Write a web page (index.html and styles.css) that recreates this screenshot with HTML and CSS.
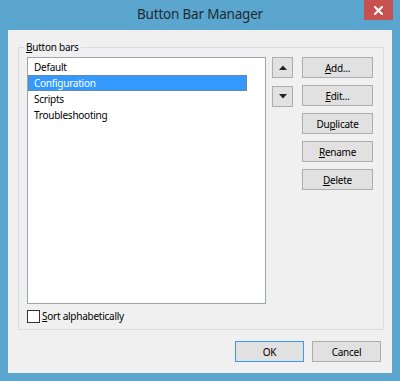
FILE: index.html
```html
<!DOCTYPE html>
<html>
<head>
<meta charset="utf-8">
<link rel="stylesheet" href="styles.css">
</head>
<body>
<div class="window">
  <div class="titlebar">
    <span class="title">Button Bar Manager</span>
    <div class="close">
      <svg width="9" height="9" viewBox="0 0 9 9"><path d="M1 1L8 8M8 1L1 8" stroke="#fff" stroke-width="2" stroke-linecap="square"/></svg>
    </div>
  </div>
  <div class="client">
    <fieldset class="group">
      <legend class="legend"><u>B</u>utton bars</legend>
      <div class="group-row">
        <div class="list">
          <div class="item">Default</div>
          <div class="item selected">Configuration</div>
          <div class="item">Scripts</div>
          <div class="item">Troubleshooting</div>
        </div>
        <div class="arrows">
          <div class="btn arrow"><svg width="8" height="5" viewBox="0 0 8 5"><path d="M0 5L4 0.5L8 5Z" fill="#222"/></svg></div>
          <div class="btn arrow"><svg width="8" height="5" viewBox="0 0 8 5"><path d="M0 0L8 0L4 4.5Z" fill="#222"/></svg></div>
        </div>
        <div class="actions">
          <div class="btn action"><u>A</u>dd...</div>
          <div class="btn action"><u>E</u>dit...</div>
          <div class="btn action">Du<u>p</u>licate</div>
          <div class="btn action"><u>R</u>ename</div>
          <div class="btn action"><u>D</u>elete</div>
        </div>
      </div>
      <div class="check">
        <span class="box"></span>
        <span class="check-label"><u>S</u>ort alphabetically</span>
      </div>
    </fieldset>
    <div class="footer">
      <div class="btn foot default">OK</div>
      <div class="btn foot">Cancel</div>
    </div>
  </div>
</div>
</body>
</html>
```
FILE: styles.css
```css
html, body {
  margin: 0;
  padding: 0;
}
body {
  background: #5aa6ce;
  font-family: "Noto Sans", "DejaVu Sans", sans-serif;
  font-size: 10px;
  letter-spacing: -0.25px;
  color: #000;
}
.window {
  width: 400px;
  height: 381px;
  display: flex;
  flex-direction: column;
  background: #5aa6ce;
}
.titlebar {
  height: 30px;
  flex: none;
  display: grid;
  grid-template-columns: 1fr auto 1fr;
  align-items: start;
}
.title {
  grid-column: 2;
  font-size: 13.5px;
  letter-spacing: -0.2px;
  line-height: 29px;
  color: #1f2b33;
}
.close {
  grid-column: 3;
  justify-self: end;
  width: 29px;
  height: 20px;
  margin-right: 7px;
  background: #c75050;
  display: flex;
  align-items: center;
  justify-content: center;
}
.client {
  flex: 1;
  margin: 0 8px 8px;
  background: #f0f0f0;
  display: flex;
  flex-direction: column;
  padding: 0 8px 0 10px;
}
.group {
  margin: 10px 0 0;
  padding: 3px 8px 6px;
  border: 1px solid #dcdcdc;
  min-width: 0;
}
.legend {
  padding: 0 2px;
  margin-left: -3px;
  line-height: 14px;
}
u {
  text-decoration: underline;
  text-underline-offset: 1px;
}
.group-row {
  display: flex;
  align-items: flex-start;
}
.list {
  width: 239px;
  height: 247px;
  box-sizing: border-box;
  border: 1px solid #9ea5ad;
  background: #fff;
  padding-top: 1px;
}
.item {
  width: 219px;
  height: 16px;
  line-height: 16px;
  box-sizing: border-box;
  padding-left: 6px;
}
.item.selected {
  background: #3399ff;
  color: #fff;
  outline: 1px dotted #8f7d5e;
  outline-offset: -1px;
}
.btn {
  box-sizing: border-box;
  border: 1px solid #adadad;
  background: #e1e1e1;
  display: flex;
  align-items: center;
  justify-content: center;
  height: 21px;
}
.arrows {
  margin-left: 6px;
  display: flex;
  flex-direction: column;
  gap: 8px;
}
.arrow {
  width: 21px;
}
.actions {
  margin-left: 9px;
  display: flex;
  flex-direction: column;
  gap: 7px;
}
.action {
  width: 71px;
}
.check {
  margin-top: 6px;
  height: 13px;
  display: flex;
  align-items: center;
}
.box {
  width: 13px;
  height: 13px;
  box-sizing: border-box;
  border: 1px solid #333;
  background: #fff;
}
.check-label {
  margin-left: 2px;
  line-height: 13px;
}
.footer {
  margin-top: 11px;
  padding-right: 3px;
  display: flex;
  justify-content: flex-end;
  gap: 8px;
}
.foot {
  width: 69px;
}
.foot.default {
  border-color: #3399ff;
}
```
